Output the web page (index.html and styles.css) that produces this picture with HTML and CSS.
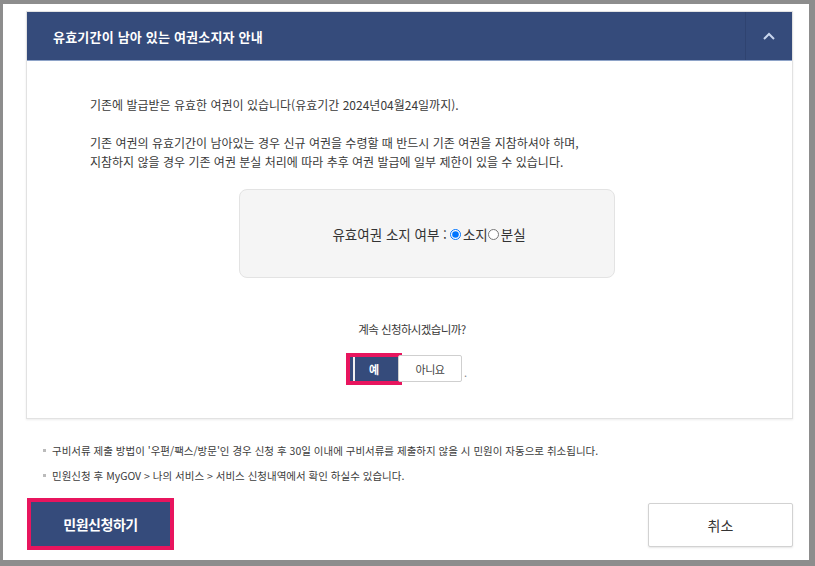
FILE: index.html
```html
<!DOCTYPE html>
<html lang="ko">
<head>
    <meta charset="UTF-8">
    <meta name="viewport" content="width=device-width, initial-scale=1.0">
    <title>유효기간이 남아 있는 여권소지자 안내</title>
    <link rel="stylesheet" href="styles.css">
</head>
<body>
    <div class="frame">
        <div class="panel">
            <div class="panel-head">
                <h2>유효기간이 남아 있는 여권소지자 안내</h2>
                <button class="toggle" aria-label="접기">
                    <svg width="12" height="8" viewBox="0 0 12 8"><path d="M1 7 L6 2 L11 7" fill="none" stroke="#c9d6ee" stroke-width="2"/></svg>
                </button>
            </div>
            <div class="panel-body">
                <p class="info">기존에 발급받은 유효한 여권이 있습니다(유효기간 2024년04월24일까지).</p>
                <p class="info">기존 여권의 유효기간이 남아있는 경우 신규 여권을 수령할 때 반드시 기존 여권을 지참하셔야 하며,<br>지참하지 않을 경우 기존 여권 분실 처리에 따라 추후 여권 발급에 일부 제한이 있을 수 있습니다.</p>

                <div class="check-box">
                    <span class="label">유효여권 소지 여부 :</span>
                    <label><input type="radio" name="own" checked>소지</label>
                    <label><input type="radio" name="own">분실</label>
                </div>

                <p class="question">계속 신청하시겠습니까?</p>
                <div class="answer">
                    <button class="btn-yes">예</button>
                    <button class="btn-no">아니요</button>
                    <span class="dot">.</span>
                </div>
            </div>
        </div>

        <ul class="notes">
            <li>구비서류 제출 방법이 '우편/팩스/방문'인 경우 신청 후 30일 이내에 구비서류를 제출하지 않을 시 민원이 자동으로 취소됩니다.</li>
            <li>민원신청 후 MyGOV &gt; 나의 서비스 &gt; 서비스 신청내역에서 확인 하실수 있습니다.</li>
        </ul>

        <div class="actions">
            <button class="btn-apply">민원신청하기</button>
            <button class="btn-cancel">취소</button>
        </div>
    </div>
</body>
</html>
```

FILE: styles.css
```css
body {
    margin: 0;
    background: #8d8d8d;
    font-family: "Noto Sans CJK KR", "Noto Sans", sans-serif;
    color: #333;
}

.frame {
    margin: 4px 6px 6px 3px;
    height: 556px;
    background: #fff;
    padding: 7px 16px 0 23px;
    box-sizing: border-box;
}

.panel {
    border: 1px solid #e2e2e2;
    box-shadow: 0 1px 2px rgba(0, 0, 0, 0.08);
}

.panel-head {
    display: flex;
    align-items: center;
    height: 48px;
    background: #354b7b;
    border-bottom: 1px solid #8ea3c8;
}

.panel-head h2 {
    flex: 1;
    margin: 0;
    padding-left: 26px;
    font-size: 13px;
    font-weight: 700;
    letter-spacing: 0.2px;
    color: #fff;
}

.toggle {
    width: 47px;
    height: 48px;
    border: none;
    border-left: 1px solid #2f4370;
    background: transparent;
    display: flex;
    align-items: center;
    justify-content: center;
    padding: 0;
}

.panel-body {
    height: 357px;
    padding: 34px 0 0 63px;
    box-sizing: border-box;
}

.info {
    margin: 0 0 19px;
    font-size: 12px;
    line-height: 19px;
    letter-spacing: 0;
    color: #3a3a3a;
}

.check-box {
    width: 376px;
    height: 89px;
    margin: -1px 0 0 149px;
    box-sizing: border-box;
    background: #f5f5f5;
    border: 1px solid #e3e3e3;
    border-radius: 8px;
    display: flex;
    align-items: center;
    justify-content: center;
    padding-left: 4px;
    font-size: 13.5px;
    color: #333;
}

.check-box .label {
    margin-right: 3px;
}

.check-box label {
    display: flex;
    align-items: center;
}

.check-box input {
    width: 11px;
    height: 11px;
    margin: 1px 2px 0 0;
}

.question {
    margin: 43px 0 0 263px;
    width: 118px;
    text-align: center;
    font-size: 11.5px;
    letter-spacing: -0.6px;
    color: #3a3a3a;
}

.answer {
    display: flex;
    align-items: center;
    margin: 18px 0 0 260px;
}

.answer button {
    font-family: inherit;
    font-size: 11px;
    cursor: pointer;
}

.btn-yes {
    width: 48px;
    height: 24px;
    border: none;
    background: #354b7b;
    color: #fff;
    font-weight: 700;
    outline: 4px solid #e8155e;
    box-shadow: inset 3px 0 0 #354b7b, inset 5px 0 0 #f0f0f0;
}

.btn-no {
    width: 64px;
    height: 27px;
    border: 1px solid #cfcfcf;
    border-radius: 2px;
    background: #fff;
    color: #444;
    letter-spacing: -0.5px;
}

.dot {
    font-size: 11px;
    color: #888;
    margin: 6px 0 0 2px;
}

.notes {
    list-style: none;
    margin: 19px 0 0;
    padding: 0 0 0 26px;
}

.notes li {
    position: relative;
    font-size: 10.5px;
    line-height: 25px;
    letter-spacing: 0;
    color: #3c3c3c;
}

.notes li::before {
    content: "";
    position: absolute;
    left: -9px;
    top: 11px;
    width: 3px;
    height: 3px;
    background: #bbb;
}

.actions {
    display: flex;
    justify-content: space-between;
    align-items: center;
    margin-top: 13px;
    padding-left: 5px;
}

.actions button {
    font-family: inherit;
    font-size: 14px;
    cursor: pointer;
}

.btn-apply {
    width: 139px;
    height: 44px;
    border: none;
    background: #354b7b;
    color: #fff;
    font-weight: 700;
    letter-spacing: -0.5px;
    outline: 4px solid #e8155e;
}

.btn-cancel {
    width: 145px;
    height: 44px;
    margin-top: 2px;
    border: 1px solid #d2d2d2;
    border-radius: 2px;
    background: #fff;
    color: #333;
    box-shadow: 0 1px 2px rgba(0, 0, 0, 0.1);
}
```
